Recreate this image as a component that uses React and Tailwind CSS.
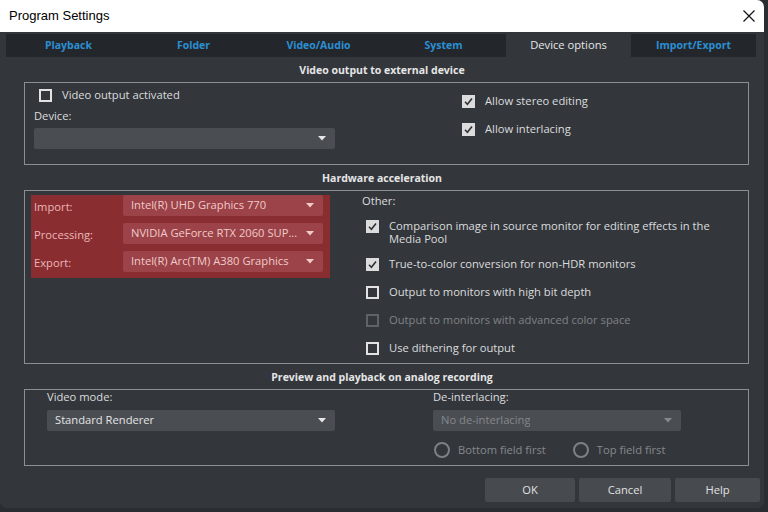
import { useState } from "react";

const tabs = ["Playback", "Folder", "Video/Audio", "System", "Device options", "Import/Export"];

function Arrow({ color = "#e6e6e6" }) {
  return (
    <svg width="8" height="5" viewBox="0 0 8 5" className="shrink-0">
      <path d="M0 0 L8 0 L4 4.5 Z" fill={color} />
    </svg>
  );
}

function Check({ checked, disabled }) {
  if (checked) {
    return (
      <div className="w-[13px] h-[13px] shrink-0 bg-[#dcdcdc] flex items-center justify-center">
        <svg width="11" height="11" viewBox="0 0 11 11">
          <path d="M2 5.8 L4.4 8.2 L9 2.6" fill="none" stroke="#2e3136" strokeWidth="1.6" />
        </svg>
      </div>
    );
  }
  return (
    <div
      className={`w-[13px] h-[13px] shrink-0 border-2 ${disabled ? "border-[#5f6368]" : "border-[#e2e2e2]"}`}
    />
  );
}

function Select({ value, w, disabled, red }) {
  const bg = red ? "bg-[#9b4348]" : "bg-[#4a4e53]";
  const text = disabled ? "text-[#84878b]" : red ? "text-[#f1caca]" : "text-[#e4e4e4]";
  return (
    <div className={`${w} h-[21px] rounded-[2px] ${bg} flex items-center justify-between pl-[8px] pr-[9px] ${text}`}>
      <span className="truncate">{value}</span>
      <Arrow color={disabled ? "#84878b" : red ? "#f1caca" : "#e6e6e6"} />
    </div>
  );
}

function Radio({ label }) {
  return (
    <div className="flex items-center gap-[8px] text-[#85888c]">
      <div className="w-[16px] h-[16px] rounded-full border-2 border-[#7d8085]" />
      <span>{label}</span>
    </div>
  );
}

function Header({ children }) {
  return (
    <div className="h-[25px] flex items-center justify-center pt-[2px] font-bold text-[10.5px] text-[#e6e6e6]">
      {children}
    </div>
  );
}

export default function App() {
  const [active, setActive] = useState(4);

  return (
    <div
      className="w-[768px] h-[512px] bg-[#2a2d31] text-[11.2px] text-[#dcdcdc]"
      style={{ fontFamily: '"Open Sans", "Noto Sans", sans-serif' }}
    >
      <div className="w-[764px] h-[508px] bg-[#33373c] rounded-b-[7px] rounded-tr-[7px] overflow-hidden flex flex-col">
        <div className="h-[32px] bg-white flex items-center justify-between pl-[9px] pr-[9px] shrink-0">
          <span
            className="text-[13px] text-black"
            style={{ fontFamily: '"Liberation Sans", Arial, sans-serif' }}
          >
            Program Settings
          </span>
          <svg width="12" height="12" viewBox="0 0 12 12">
            <path d="M0.5 0.5 L11.5 11.5 M11.5 0.5 L0.5 11.5" stroke="#111" strokeWidth="1.2" />
          </svg>
        </div>

        <div className="mt-[2px] ml-[6px] flex h-[23px] shrink-0">
          {tabs.map((t, i) => (
            <button
              key={t}
              onClick={() => setActive(i)}
              className={`w-[125px] flex items-center justify-center text-[10.5px] ${
                i === active ? "bg-[#33373c] text-[#e6e6e6] text-[11.2px]" : "bg-[#23272b] text-[#2b8fd3] font-bold"
              }`}
            >
              {t}
            </button>
          ))}
        </div>

        <Header>Video output to external device</Header>
        <div className="ml-[24px] w-[725px] h-[83px] border border-[#8b8e92] flex">
          <div className="w-[437px] pl-[9px] pt-[2px]">
            <div className="h-[20px] flex items-center gap-[10px] pl-[5px]">
              <Check />
              <span>Video output activated</span>
            </div>
            <div className="h-[20px] mt-[1px] flex items-center">Device:</div>
            <div className="mt-[2px]">
              <Select value="" w="w-[301px]" />
            </div>
          </div>
          <div className="pt-[4px]">
            <div className="h-[28px] flex items-center gap-[10px]">
              <Check checked />
              <span>Allow stereo editing</span>
            </div>
            <div className="h-[28px] flex items-center gap-[10px]">
              <Check checked />
              <span>Allow interlacing</span>
            </div>
          </div>
        </div>

        <Header>Hardware acceleration</Header>
        <div className="ml-[24px] w-[725px] h-[174px] border border-[#8b8e92] flex">
          <div className="w-[331px] pl-[6px] pt-[4px]">
            <div className="w-[299px] h-[83px] bg-[#8a2d31] pl-[3px] flex flex-col gap-[7px]">
              {[
                ["Import:", "Intel(R) UHD Graphics 770"],
                ["Processing:", "NVIDIA GeForce RTX 2060 SUP..."],
                ["Export:", "Intel(R) Arc(TM) A380 Graphics"],
              ].map(([l, v]) => (
                <div key={l} className="flex h-[21px]">
                  <div className="w-[89px] text-[#eab7b9] pt-[4px]">{l}</div>
                  <Select value={v} w="w-[200px]" red />
                </div>
              ))}
            </div>
          </div>
          <div className="pl-[6px]">
            <div className="h-[21px] flex items-center">Other:</div>
            <div className="pl-[4px]">
              <div className="h-[38px] flex items-start gap-[10px] pt-[7px]">
                <div className="mt-[1px]">
                  <Check checked />
                </div>
                <span className="leading-[13px] w-[345px]">
                  Comparison image in source monitor for editing effects in the Media Pool
                </span>
              </div>
              <div className="h-[28px] flex items-center gap-[10px]">
                <Check checked />
                <span>True-to-color conversion for non-HDR monitors</span>
              </div>
              <div className="h-[28px] flex items-center gap-[10px]">
                <Check />
                <span>Output to monitors with high bit depth</span>
              </div>
              <div className="h-[28px] flex items-center gap-[10px] text-[#7f8286]">
                <Check disabled />
                <span>Output to monitors with advanced color space</span>
              </div>
              <div className="h-[28px] flex items-center gap-[10px]">
                <Check />
                <span>Use dithering for output</span>
              </div>
            </div>
          </div>
        </div>

        <Header>Preview and playback on analog recording</Header>
        <div className="ml-[24px] w-[725px] h-[77px] border border-[#8b8e92] flex">
          <div className="w-[408px] pl-[22px]">
            <div className="h-[14px] flex items-center">Video mode:</div>
            <div className="mt-[6px]">
              <Select value="Standard Renderer" w="w-[288px]" />
            </div>
          </div>
          <div>
            <div className="h-[14px] flex items-center">De-interlacing:</div>
            <div className="mt-[6px]">
              <Select value="No de-interlacing" w="w-[248px]" disabled />
            </div>
            <div className="mt-[8px] h-[22px] flex items-center gap-[27px] pl-[1px]">
              <Radio label="Bottom field first" />
              <Radio label="Top field first" />
            </div>
          </div>
        </div>

        <div className="mt-[12px] flex justify-end gap-[4px] pr-[4px]">
          <button className="w-[90px] h-[24px] rounded-[2px] bg-[#474b50] text-[#e0e0e0]">OK</button>
          <button className="w-[92px] h-[24px] rounded-[2px] bg-[#474b50] text-[#e0e0e0]">Cancel</button>
          <button className="w-[85px] h-[24px] rounded-[2px] bg-[#474b50] text-[#e0e0e0]">Help</button>
        </div>
      </div>
    </div>
  );
}
